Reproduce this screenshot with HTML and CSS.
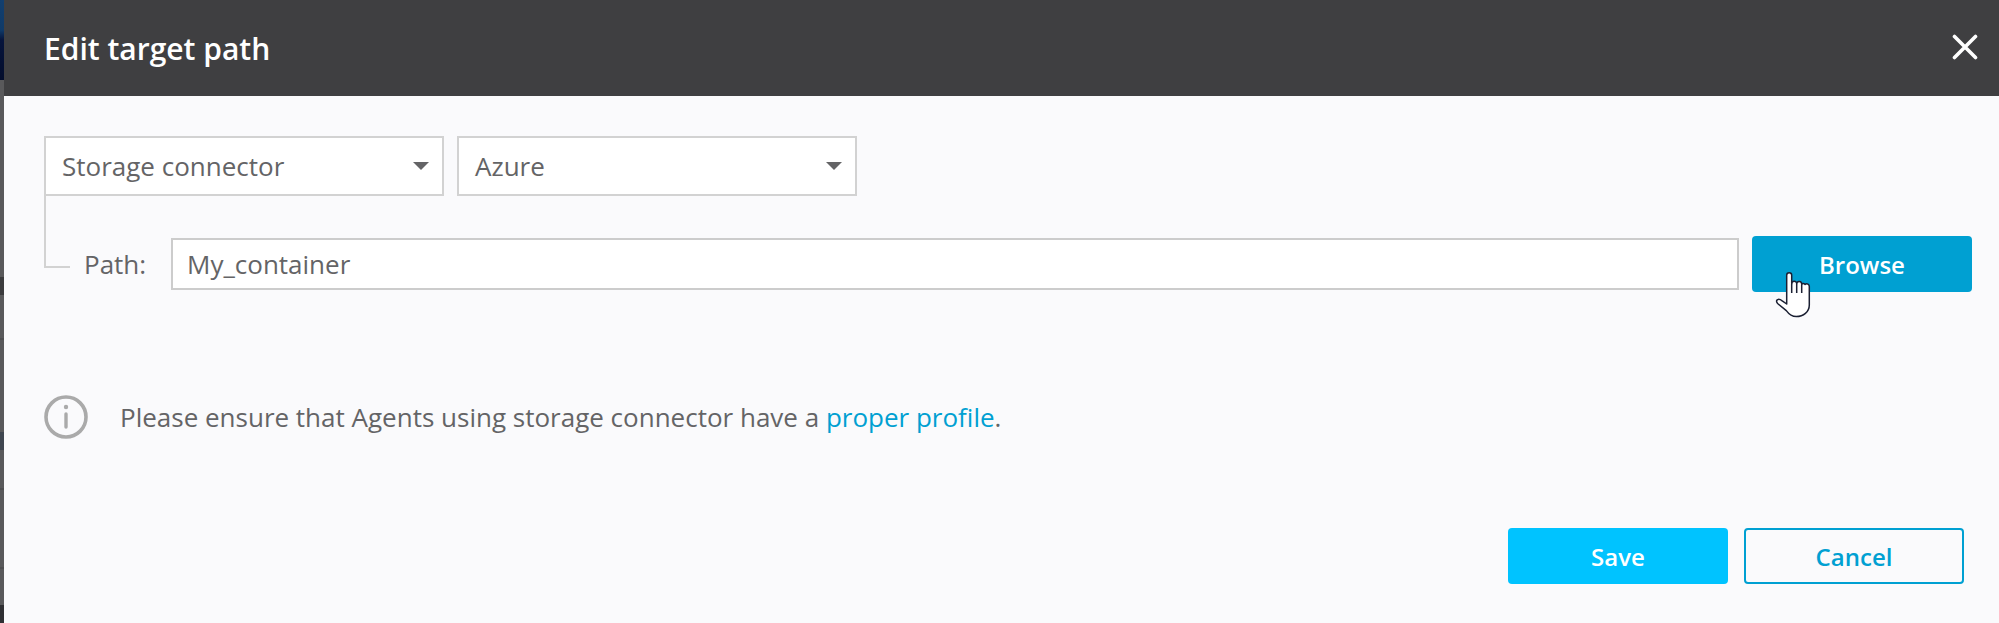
FILE: index.html
```html
<!doctype html>

<html>
<head>
    <meta charset="utf-8">
    <title>Edit target path</title>
    <link rel="stylesheet" href="styles.css">
</head>

<body>
<div class="backdrop"></div>
<div class="dialog">
    <div class="dialog-head">
        <h2>Edit target path</h2>
        <svg class="close" width="26" height="26" viewBox="0 0 26 26">
            <path d="M2.5 2.5 L23.5 23.5 M23.5 2.5 L2.5 23.5" stroke="#fff" stroke-width="3.6" stroke-linecap="round" fill="none"/>
        </svg>
    </div>
    <div class="dialog-body">
        <div class="selects">
            <div class="select">
                <span>Storage connector</span>
                <i class="caret"></i>
            </div>
            <div class="select">
                <span>Azure</span>
                <i class="caret"></i>
            </div>
        </div>
        <div class="path-row">
            <div class="connector"></div>
            <label class="path-label">Path:</label>
            <div class="path-input">My_container</div>
            <div class="button browse">Browse</div>
            <svg class="cursor" width="38" height="50" viewBox="0 0 38 50">
                <path d="M11.7 29 V5.2 a2.5 2.5 0 0 1 5 0 V13.6 a2.5 2.5 0 0 1 5 .2 a2.5 2.5 0 0 1 5 .4 a2.5 2.5 0 0 1 3.4 .2 a2.6 2.6 0 0 1 4.2 2.3 V35 c0 7 -6 11.6 -13 11.6 c-5 0 -7.500 -2.600 -10 -6 L2.600 33.500 c-1.800 -2 -1 -3.900 .6 -4.100 c1.500 -.2 2.600 .4 4 1.500 L11.700 34 Z" fill="#fff" stroke="#1b2033" stroke-width="1.500" stroke-linejoin="round"/>
                <path d="M16.700 13.600 V23 M21.700 13.800 V23 M26.700 14.200 V23" stroke="#1b2033" stroke-width="1.500" fill="none"/>
            </svg>
        </div>
        <div class="notice">
            <svg class="info" width="44" height="44" viewBox="0 0 44 44">
                <circle cx="22" cy="22" r="20" fill="none" stroke="#aaa" stroke-width="3.600"/>
                <circle cx="22" cy="12" r="2.200" fill="#aaa"/>
                <path d="M22 19 V32" stroke="#aaa" stroke-width="3.400" stroke-linecap="round"/>
            </svg>
            <p>Please ensure that Agents using storage connector have a <a href="#">proper profile</a>.</p>
        </div>
        <div class="actions">
            <div class="button save">Save</div>
            <div class="button cancel">Cancel</div>
        </div>
    </div>
</div>
</body>
</html>
```

FILE: styles.css
```css
html, body {
    margin: 0;
    height: 100%;
}
body {
    display: flex;
    height: 623px;
    overflow: hidden;
    font-family: "Open Sans", sans-serif;
    color: #646466;
    background: #fafafc;
}
/* sliver of the dimmed page left of the dialog */
.backdrop {
    width: 4px;
    flex: none;
    background: linear-gradient(to bottom,
        #123f6f 0, #0f3a68 30px, #06143c 40px, #030d2c 80px,
        #59595b 80px, #59595b 277px, #3b3b3d 277px, #3b3b3d 295px,
        #59595b 295px, #59595b 338px, #4f4f51 338px, #4f4f51 340px,
        #59595b 340px, #59595b 432px, #3f4650 432px, #3f4650 450px,
        #59595b 450px, #59595b 488px, #4f4f51 488px, #4f4f51 490px,
        #59595b 490px, #59595b 567px, #4f4f51 567px, #4f4f51 569px,
        #59595b 569px, #59595b 605px, #2f2f33 605px);
}

.dialog {
    flex: 1;
    display: flex;
    flex-direction: column;
    background: #fafafc;
}
.dialog-head {
    height: 96px;
    flex: none;
    display: flex;
    align-items: center;
    justify-content: space-between;
    padding: 0 21px 0 40px;
    background: #3f3f41;
    color: #fff;
}
.dialog-head h2 {
    margin: 0;
    font-size: 30px;
    font-weight: 600;
}
.close { margin-top: -2px; }

.dialog-body {
    flex: 1;
    display: flex;
    flex-direction: column;
    padding: 40px 27px 39px 40px;
}
.selects { display: flex; gap: 13px; }
.select {
    width: 400px;
    height: 60px;
    box-sizing: border-box;
    display: flex;
    align-items: center;
    justify-content: space-between;
    padding: 0 13px 0 16px;
    background: #fff;
    border: 2px solid #d2d2d2;
    font-size: 26px;
}
.caret {
    border-top: 8px solid #646466;
    border-left: 8px solid transparent;
    border-right: 8px solid transparent;
}

.path-row {
    position: relative;
    display: flex;
    align-items: flex-start;
}
.connector {
    width: 24px;
    height: 70px;
    flex: none;
    border-left: 2px solid #d2d2d2;
    border-bottom: 2px solid #d2d2d2;
}
.path-label {
    width: 101px;
    padding-left: 14px;
    box-sizing: border-box;
    margin-top: 50px;
    line-height: 36px;
    font-size: 26px;
    flex: none;
}
.path-input {
    flex: 1;
    height: 52px;
    box-sizing: border-box;
    margin-top: 42px;
    padding: 0 14px;
    line-height: 48px;
    background: #fff;
    border: 2px solid #ccc;
    font-size: 26px;
}
.button {
    width: 220px;
    height: 56px;
    box-sizing: border-box;
    display: flex;
    align-items: center;
    justify-content: center;
    border-radius: 4px;
    font-size: 24px;
    font-weight: 600;
    color: #fff;
}
.browse {
    margin: 40px 0 0 13px;
    background: #00a0d2;
}
.cursor {
    position: absolute;
    right: 159px;
    top: 74px;
}

.notice {
    display: flex;
    align-items: center;
    margin-top: 103px;
}
.notice p {
    margin: 0 0 0 32px;
    font-size: 26px;
}
.notice a { color: #00a0d2; text-decoration: none; }

.actions {
    display: flex;
    justify-content: flex-end;
    gap: 16px;
    margin-top: auto;
    padding-right: 8px;
}
.save { background: #00c3ff; }
.cancel {
    background: transparent;
    border: 2px solid #00a0d2;
    color: #00a0d2;
}
```
